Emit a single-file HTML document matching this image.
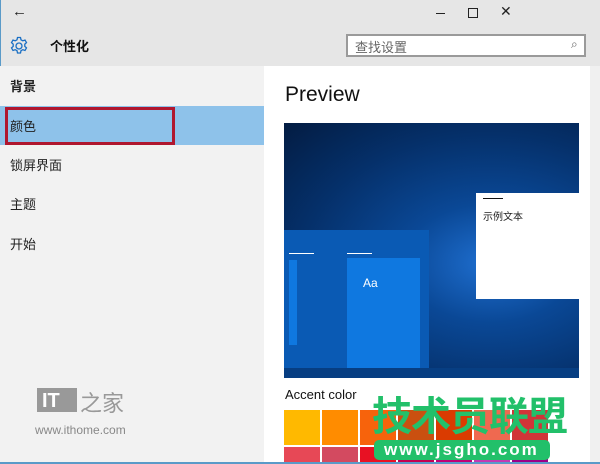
<!DOCTYPE html><html><head><meta charset="utf-8"><style>
body{margin:0;width:600px;height:464px;overflow:hidden;font-family:"Liberation Sans","Noto Sans CJK SC",sans-serif;position:relative;background:#fff}
.a{position:absolute}
</style></head><body>
<div class="a" style="left:0;top:0;width:600px;height:66px;background:#e6e6e6"></div>
<div class="a" style="left:0;top:0;width:1px;height:464px;background:#5a9ac8"></div>
<div class="a" style="left:0;top:462px;width:600px;height:2px;background:#5a9ac8"></div>
<div class="a" style="left:12px;top:3px;font-size:15px;color:#222">←</div>
<div class="a" style="left:436px;top:13px;width:9px;height:1px;background:#222"></div>
<div class="a" style="left:468px;top:8px;width:8px;height:8px;border:1px solid #222"></div>
<div class="a" style="left:500px;top:3px;font-size:14px;color:#222">✕</div>
<svg class="a" style="left:9px;top:36px" width="20" height="20" viewBox="0 0 20 20"><g fill="none" stroke="#1a6fc4" stroke-width="1.3"><circle cx="10" cy="10" r="3"/><path d="M8.5 1.5h3l.5 2.3 1.8 1 2.2-.8 1.5 2.6-1.7 1.6v2.1l1.7 1.6-1.5 2.6-2.2-.8-1.8 1-.5 2.3h-3l-.5-2.3-1.8-1-2.2.8-1.5-2.6 1.7-1.6V8.2L2.5 6.6 4 4l2.2.8 1.8-1z"/></g></svg>
<div class="a" style="left:50px;top:36px;font-size:13px;font-weight:bold;color:#111">个性化</div>
<div class="a" style="left:346px;top:34px;width:240px;height:23px;border:2px solid #9a9a9a;background:#fff;box-sizing:border-box"></div>
<div class="a" style="left:355px;top:37px;font-size:13px;color:#666">查找设置</div>
<div class="a" style="left:571px;top:37px;font-size:12px;color:#666">⌕</div>
<div class="a" style="left:0;top:66px;width:264px;height:396px;background:#f2f2f2"></div>
<div class="a" style="left:0;top:106px;width:264px;height:39px;background:#8ec2ea"></div>
<div class="a" style="left:5px;top:107px;width:164px;height:32px;border:3px solid #b0172f"></div>
<div class="a" style="left:10px;top:76px;font-size:13px;font-weight:bold;color:#222">背景</div>
<div class="a" style="left:10px;top:116px;font-size:13px;color:#222">颜色</div>
<div class="a" style="left:10px;top:155px;font-size:13px;color:#222">锁屏界面</div>
<div class="a" style="left:10px;top:194px;font-size:13px;color:#222">主题</div>
<div class="a" style="left:10px;top:234px;font-size:13px;color:#222">开始</div>
<div class="a" style="left:37px;top:388px;width:40px;height:24px;background:#999"></div>
<div class="a" style="left:42px;top:390px;font-size:20px;font-weight:bold;color:#fff">IT</div>
<div class="a" style="left:80px;top:386px;font-size:22px;color:#999">之家</div>
<div class="a" style="left:35px;top:423px;font-size:12px;color:#888">www.ithome.com</div>
<div class="a" style="left:590px;top:66px;width:10px;height:396px;background:#f0f0f0"></div>
<div class="a" style="left:285px;top:83px;font-size:21px;color:#111">Preview</div>
<div class="a" style="left:284px;top:123px;width:295px;height:255px;background:radial-gradient(ellipse at 70% 55%,#1f6fd0 0%,#0a4896 30%,#05306a 65%,#031c42 100%)"></div>
<div class="a" style="left:284px;top:230px;width:145px;height:138px;background:#0a5ab4"></div>
<div class="a" style="left:284px;top:368px;width:295px;height:10px;background:#073e82"></div>
<div class="a" style="left:347px;top:258px;width:73px;height:110px;background:#0f78e0"></div>
<div class="a" style="left:363px;top:276px;font-size:12px;color:#fff">Aa</div>
<div class="a" style="left:289px;top:260px;width:8px;height:85px;background:#0f78e0"></div>
<div class="a" style="left:289px;top:253px;width:25px;height:1px;background:#fff"></div>
<div class="a" style="left:347px;top:253px;width:25px;height:1px;background:#fff"></div>
<div class="a" style="left:476px;top:193px;width:103px;height:106px;background:#fff"></div>
<div class="a" style="left:483px;top:198px;width:20px;height:1px;background:#111"></div>
<div class="a" style="left:483px;top:208px;font-size:10px;color:#222">示例文本</div>
<div class="a" style="left:285px;top:387px;font-size:13px;color:#111">Accent color</div>
<div class="a" style="left:284px;top:410px;width:36px;height:35px;background:#ffb900"></div>
<div class="a" style="left:322px;top:410px;width:36px;height:35px;background:#ff8c00"></div>
<div class="a" style="left:360px;top:410px;width:36px;height:35px;background:#f7630c"></div>
<div class="a" style="left:398px;top:410px;width:36px;height:35px;background:#ca5010"></div>
<div class="a" style="left:436px;top:410px;width:36px;height:35px;background:#da3b01"></div>
<div class="a" style="left:474px;top:410px;width:36px;height:35px;background:#ef6950"></div>
<div class="a" style="left:512px;top:410px;width:36px;height:35px;background:#d13438"></div>
<div class="a" style="left:284px;top:447px;width:36px;height:15px;background:#e74856"></div>
<div class="a" style="left:322px;top:447px;width:36px;height:15px;background:#d34a60"></div>
<div class="a" style="left:360px;top:447px;width:36px;height:15px;background:#e81123"></div>
<div class="a" style="left:398px;top:447px;width:36px;height:15px;background:#c30052"></div>
<div class="a" style="left:436px;top:447px;width:36px;height:15px;background:#bf0077"></div>
<div class="a" style="left:474px;top:447px;width:36px;height:15px;background:#c239b3"></div>
<div class="a" style="left:512px;top:447px;width:36px;height:15px;background:#9a0089"></div>
<div class="a" style="left:372px;top:393px;font-size:40px;font-weight:bold;color:#22c06a;letter-spacing:-1px;line-height:48px">技术员联盟</div>
<div class="a" style="left:374px;top:440px;width:176px;height:20px;background:#22c06a;border-radius:5px"></div>
<div class="a" style="left:384px;top:440px;font-size:17px;font-weight:bold;color:#fff;letter-spacing:2px">www.jsgho.com</div>
</body></html>
